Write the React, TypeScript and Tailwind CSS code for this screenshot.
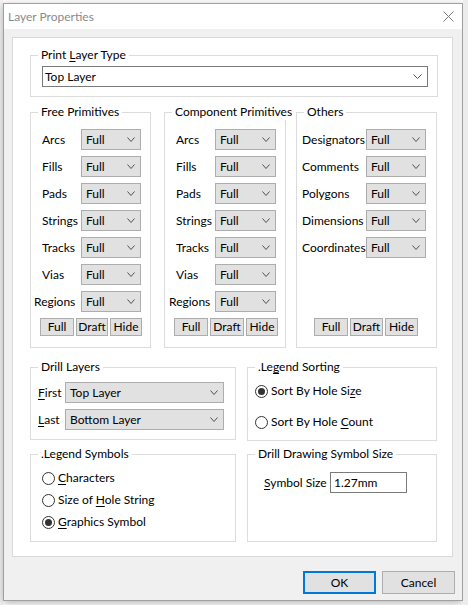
import React from "react";

const Chevron = ({ w = 8 }: { w?: number }) => (
  <svg width={w} height="5" viewBox={`0 0 ${w} 5`} className="shrink-0">
    <path d={`M0.5 0.5 L${w / 2} 4.5 L${w - 0.5} 0.5`} fill="none" stroke="#505050" strokeWidth="1" />
  </svg>
);

function Combo({ value, className }: { value: string; className: string }) {
  return (
    <div
      className={`flex items-center justify-between h-[21px] border border-[#adadad] bg-[#e1e1e1] pl-[4px] pr-[5px] shrink-0 ${className}`}
    >
      <span>{value}</span>
      <Chevron />
    </div>
  );
}

function Group({
  title,
  className,
  inner,
  legendClass = "",
  children,
}: {
  title: React.ReactNode;
  className: string;
  inner: string;
  legendClass?: string;
  children?: React.ReactNode;
}) {
  return (
    <fieldset className={`min-w-0 border border-[#dcdcdc] ${className}`}>
      <legend className={`ml-[7px] px-[3px] leading-[16px] whitespace-nowrap ${legendClass}`}>{title}</legend>
      <div className={inner}>{children}</div>
    </fieldset>
  );
}

function Btn({ label, className }: { label: string; className: string }) {
  return (
    <div
      className={`flex items-center justify-center h-[18px] border border-[#adadad] bg-[#e1e1e1] leading-none ${className}`}
    >
      {label}
    </div>
  );
}

function Radio({ checked, children }: { checked?: boolean; children: React.ReactNode }) {
  return (
    <div className="flex items-center h-[22px]">
      <div className="w-[13px] h-[13px] rounded-full border border-[#333333] bg-white flex items-center justify-center shrink-0">
        {checked && <div className="w-[7px] h-[7px] rounded-full bg-[#333333]" />}
      </div>
      <span className="ml-[3px] whitespace-nowrap">{children}</span>
    </div>
  );
}

const U = ({ children }: { children: React.ReactNode }) => <span className="underline underline-offset-2">{children}</span>;

function PrimRows({
  labels,
  labelW,
  selW,
  regionsShift,
}: {
  labels: string[];
  labelW: string;
  selW: string;
  regionsShift?: string;
}) {
  return (
    <div className="flex flex-col gap-[6px]">
      {labels.map((l) => (
        <div key={l} className="flex items-center h-[21px]">
          <span className={`whitespace-nowrap ${l === "Regions" && regionsShift ? regionsShift : labelW}`}>{l}</span>
          <Combo value="Full" className={selW} />
        </div>
      ))}
    </div>
  );
}

export default function App() {
  const prims = ["Arcs", "Fills", "Pads", "Strings", "Tracks", "Vias", "Regions"];
  const others = ["Designators", "Comments", "Polygons", "Dimensions", "Coordinates"];
  return (
    <div className="w-[468px] h-[605px] overflow-hidden bg-white flex font-['Lato',sans-serif] text-[12px] leading-[16px] text-black">
      <div className="w-[3px] h-full bg-[#f4f4f4] shrink-0" />
      <div className="flex flex-col shrink-0 pt-[3px]">
        <div className="w-[460px] h-[598px] border border-[#a0a0a0] bg-[#f0f0f0] flex flex-col shadow-[0_2px_8px_rgba(0,0,0,0.3)]">
          {/* Title bar */}
          <div className="h-[25px] bg-white flex items-center justify-between pl-[4px] pr-[8px]">
            <span className="text-[#8a8a8a] text-[12px]">Layer Properties</span>
            <svg width="11" height="11" viewBox="0 0 11 11">
              <path d="M0.5 0.5 L10.5 10.5 M10.5 0.5 L0.5 10.5" stroke="#7a7a7a" strokeWidth="1" />
            </svg>
          </div>
          {/* Panel */}
          <div className="ml-[8px] mt-[8px] w-[441px] h-[520px] bg-white border border-[#d9d9d9] pl-[17px] pt-[9px] flex flex-col">
            <Group title={<>Print <U>L</U>ayer Type</>} className="w-[408px] h-[50px]" inner="pl-[11px]">
              <div className="mt-[3px] w-[386px] h-[21px] border border-[#7a7a7a] bg-white flex items-center justify-between pl-[2px] pr-[5px]">
                <span>Top Layer</span>
                <Chevron w={9} />
              </div>
            </Group>

            <div className="flex mt-[7px]">
              <Group title="Free Primitives" className="w-[121px] h-[244px]" inner="pl-[11px]">
                <div className="mt-[9px]">
                  <PrimRows labels={prims} labelW="w-[39px]" selW="w-[60px]" regionsShift="ml-[-8px] w-[47px]" />
                </div>
                <div className="flex mt-[6px] ml-[-2px] gap-[2px]">
                  <Btn label="Full" className="w-[34px]" />
                  <Btn label="Draft" className="w-[32px]" />
                  <Btn label="Hide" className="w-[32px]" />
                </div>
              </Group>
              <Group
                title="Component Primitives"
                className="w-[122px] h-[244px] ml-[13px]"
                inner="pl-[11px]"
                legendClass="pr-0"
              >
                <div className="mt-[9px]">
                  <PrimRows labels={prims} labelW="w-[39px]" selW="w-[61px]" regionsShift="ml-[-7px] w-[46px]" />
                </div>
                <div className="flex mt-[6px] ml-[-2px] gap-[2px]">
                  <Btn label="Full" className="w-[34px]" />
                  <Btn label="Draft" className="w-[34px]" />
                  <Btn label="Hide" className="w-[32px]" />
                </div>
              </Group>
              <Group title="Others" className="w-[141px] h-[244px] ml-[10px]" inner="pl-[5px]">
                <div className="mt-[9px]">
                  <PrimRows labels={others} labelW="w-[64px]" selW="w-[60px]" />
                </div>
                <div className="flex mt-[60px] ml-[12px] gap-[2px]">
                  <Btn label="Full" className="w-[34px]" />
                  <Btn label="Draft" className="w-[33px]" />
                  <Btn label="Hide" className="w-[33px]" />
                </div>
              </Group>
            </div>

            <div className="flex mt-[11px]">
              <div className="flex flex-col w-[206px]">
                <Group title="Drill Layers" className="w-[206px] h-[81px]" inner="pl-[7px]">
                  <div className="mt-[7px] flex flex-col gap-[6px]">
                    <div className="flex items-center h-[21px]">
                      <span className="w-[27px]"><U>F</U>irst</span>
                      <Combo value="Top Layer" className="w-[159px]" />
                    </div>
                    <div className="flex items-center h-[21px]">
                      <span className="w-[27px]"><U>L</U>ast</span>
                      <Combo value="Bottom Layer" className="w-[159px]" />
                    </div>
                  </div>
                </Group>
                <Group title=".Legend Symbols" className="w-[206px] h-[96px] mt-[6px]" inner="pl-[11px]">
                  <div className="mt-[5px]">
                    <Radio><U>C</U>haracters</Radio>
                    <Radio>Size of <U>H</U>ole String</Radio>
                    <Radio checked><U>G</U>raphics Symbol</Radio>
                  </div>
                </Group>
              </div>
              <div className="flex flex-col w-[190px] ml-[11px]">
                <Group title={<>.Le<U>g</U>end Sorting</>} className="w-[190px] h-[82px]" inner="pl-[7px]">
                  <div className="mt-[5px] flex flex-col gap-[9px]">
                    <Radio checked>Sort By Hole Si<U>z</U>e</Radio>
                    <Radio>Sort By Hole <U>C</U>ount</Radio>
                  </div>
                </Group>
                <Group title="Drill Drawing Symbol Size" className="w-[190px] h-[96px] mt-[5px]" inner="pl-[16px]">
                  <div className="mt-[10px] flex items-center">
                    <span className="w-[66px] whitespace-nowrap"><U>S</U>ymbol Size</span>
                    <div className="w-[77px] h-[21px] border border-[#7a7a7a] bg-white flex items-center pl-[3px]">1.27mm</div>
                  </div>
                </Group>
              </div>
            </div>
          </div>
          {/* Footer */}
          <div className="flex justify-end gap-[6px] mt-[14px] pr-[7px]">
            <div className="w-[73px] h-[23px] border-2 border-[#0078d7] bg-[#e1e1e1] flex items-center justify-center">OK</div>
            <div className="w-[73px] h-[23px] border border-[#adadad] bg-[#e1e1e1] flex items-center justify-center">Cancel</div>
          </div>
        </div>
      </div>
      <div className="flex-1 h-full bg-[#ececec]" />
    </div>
  );
}
